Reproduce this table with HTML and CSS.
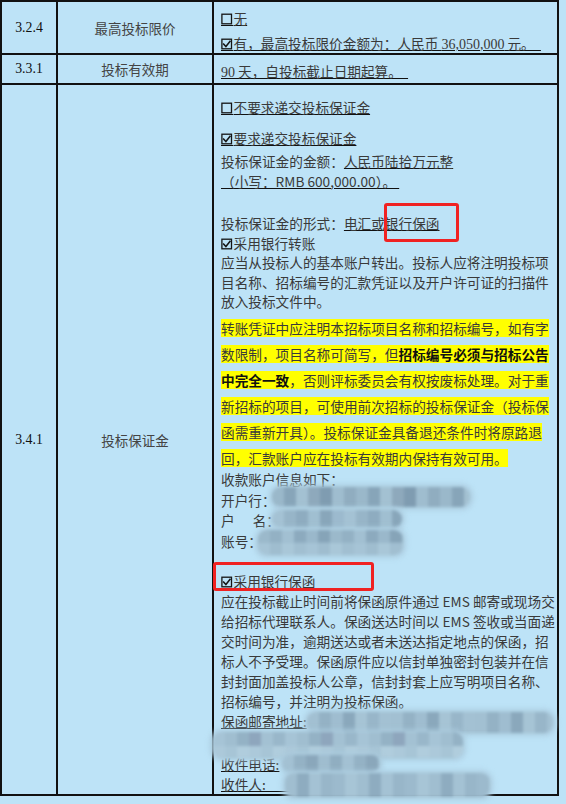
FILE: index.html
```html
<!DOCTYPE html>
<html lang="zh-CN">
<head>
<meta charset="utf-8">
<title>投标人须知前附表</title>
<link rel="stylesheet" href="styles.css">
</head>
<body>
<div class="page">
  <table class="grid">
    <tr class="stub"><td class="c1"></td><td class="c2"></td><td class="c3"></td></tr>
    <tr>
      <td class="c1 num">3.2.4</td>
      <td class="c2 label">最高投标限价</td>
      <td class="c3 body b1">
        <div class="l19"><span class="u"><svg class="cbx" viewBox="0 0 12 13"><rect x="0.9" y="1.2" width="9.6" height="9.6"/><path class="ul" d="M0 12.5H12"/></svg>无</span></div>
        <div class="l19 mt6"><span class="u"><svg class="cbx" viewBox="0 0 12 13"><rect x="0.9" y="1.2" width="9.6" height="9.6"/><path class="ck" d="M2.6 6.1L4.9 8.5L9 3.4"/><path class="ul" d="M0 12.5H12"/></svg>有，最高投标限价金额为：人民币 <span class="tnr">36,050,000</span> 元。&nbsp;&nbsp;</span></div>
      </td>
    </tr>
    <tr>
      <td class="c1 num">3.3.1</td>
      <td class="c2 label">投标有效期</td>
      <td class="c3 body b2">
        <div class="l20"><span class="u"><span class="tnr">90</span> 天，自投标截止日期起算。&nbsp;&nbsp;</span></div>
      </td>
    </tr>
    <tr>
      <td class="c1 num">3.4.1</td>
      <td class="c2 label">投标保证金</td>
      <td class="c3 body b3">
        <div class="ln"><span class="u"><svg class="cbx" viewBox="0 0 12 13"><rect x="0.9" y="1.2" width="9.6" height="9.6"/><path class="ul" d="M0 12.5H12"/></svg>不要求递交投标保证金</span></div>
        <div class="ln m115"><span class="u"><svg class="cbx" viewBox="0 0 12 13"><rect x="0.9" y="1.2" width="9.6" height="9.6"/><path class="ck" d="M2.6 6.1L4.9 8.5L9 3.4"/><path class="ul" d="M0 12.5H12"/></svg>要求递交投标保证金</span></div>
        <div class="m35">
          <div class="ln">投标保证金的金额：<span class="u">人民币陆拾万元整</span></div>
          <div class="ln"><span class="u">（小写：RMB 600,000.00）。&nbsp;</span></div>
        </div>
        <div class="m23">
          <div class="ln">投标保证金的形式：<span class="u">电汇或银行保函</span></div>
          <div class="ln"><svg class="cbx" viewBox="0 0 12 13"><rect x="0.9" y="1.2" width="9.6" height="9.6"/><path class="ck" d="M2.6 6.1L4.9 8.5L9 3.4"/></svg>采用银行转账</div>
          <div class="ln">应当从投标人的基本账户转出。投标人应将注明投标项</div>
          <div class="ln">目名称、招标编号的汇款凭证以及开户许可证的扫描件</div>
          <div class="ln">放入投标文件中。</div>
        </div>
        <div class="hl-blk">
          <div class="hl"><span>转账凭证中应注明本招标项目名称和招标编号，如有字</span></div>
          <div class="hl"><span>数限制，项目名称可简写，但<b>招标编号必须与招标公告</b></span></div>
          <div class="hl"><span><b>中完全一致</b>，否则评标委员会有权按废标处理。对于重</span></div>
          <div class="hl"><span>新招标的项目，可使用前次招标的投标保证金（投标保</span></div>
          <div class="hl"><span>函需重新开具）。投标保证金具备退还条件时将原路退</span></div>
          <div class="hl"><span>回，汇款账户应在投标有效期内保持有效可用。</span></div>
        </div>
        <div class="acct">
          <div>收款账户信息如下：</div>
          <div>开户行：</div>
          <div>户<span class="sp"></span>名：</div>
          <div>账号：</div>
        </div>
        <div class="gua">
          <div><svg class="cbx" viewBox="0 0 12 13"><rect x="0.9" y="1.2" width="9.6" height="9.6"/><path class="ck" d="M2.6 6.1L4.9 8.5L9 3.4"/></svg>采用银行保函</div>
          <div>应在投标截止时间前将保函原件通过 EMS 邮寄或现场交</div>
          <div>给招标代理联系人。保函送达时间以 EMS 签收或当面递</div>
          <div>交时间为准，逾期送达或者未送达指定地点的保函，招</div>
          <div>标人不予受理。保函原件应以信封单独密封包装并在信</div>
          <div>封封面加盖投标人公章，信封封套上应写明项目名称、</div>
          <div>招标编号，并注明为投标保函。</div>
          <div><span class="u">保函邮寄地址:</span></div>
          <div>&nbsp;</div>
        </div>
        <div class="recv">
          <div><span class="u">收件电话:</span></div>
          <div><span class="u">收件人:&nbsp;&nbsp;&nbsp;&nbsp;&nbsp;&nbsp;&nbsp;&nbsp;&nbsp;&nbsp;&nbsp;&nbsp;</span></div>
        </div>
      </td>
    </tr>
  </table>

  <div class="addr-line"></div>
  <div class="blur bA"></div>
  <div class="blur bB"></div>
  <div class="blur bC"></div>
  <div class="blur bD"></div>
  <div class="blur bE"></div>
  <div class="blur bF"></div>
  <div class="blur bG"></div>

  <div class="mark mark1"></div>
  <div class="mark mark2"></div>
</div>
</body>
</html>
```
FILE: styles.css
```css
html, body {
  margin: 0;
  padding: 0;
  background: #bde3f7;
}
body {
  font-family: "Noto Sans CJK SC", sans-serif;
  color: #3a3a3a;
}
.page {
  position: relative;
  width: 566px;
  height: 804px;
  overflow: hidden;
}
.grid {
  border-collapse: separate;
  border-spacing: 0;
  table-layout: fixed;
  width: 559px;
}
.grid td {
  box-sizing: border-box;
  padding: 0;
  border-right: 2px solid #111;
  border-bottom: 2px solid #111;
}
.grid td.c1 {
  width: 58px;
  border-left: 2px solid #111;
}
.grid td.c2 { width: 156px; }
.grid td.c3 { width: 345px; }
.stub td { height: 2px; font-size: 0; line-height: 0; }

.num {
  font-family: "Liberation Serif", serif;
  font-size: 13.8px;
  line-height: 16px;
  color: #111;
  text-align: center;
  vertical-align: middle;
}
.label {
  font-size: 13.5px;
  line-height: 16px;
  color: #444;
  text-align: center;
  vertical-align: middle;
}
.grid td.body {
  vertical-align: top;
  padding-left: 7px;
  font-size: 13.66px;
  white-space: nowrap;
}
.grid td.b1 { padding-top: 7px; }
.grid td.b2 { padding-top: 6px; padding-bottom: 2px; }
.grid td.b3 { padding-top: 13px; }

.l19 { line-height: 19px; height: 19px; }
.l20 { line-height: 20px; height: 20px; }
.mt6 { margin-top: 6px; }
.ln { line-height: 19.5px; height: 19.5px; }
.m115 { margin-top: 11.5px; }
.m35 { margin-top: 3.5px; }
.m23 { margin-top: 23px; }

.u {
  text-decoration: underline;
  text-decoration-color: #111;
  text-decoration-thickness: 1px;
}
.tnr {
  font-family: "Liberation Serif", serif;
  font-size: 14px;
  line-height: 0;
}

/* checkbox symbols */
.cbx {
  display: inline-block;
  width: 12px;
  height: 13px;
  vertical-align: -2px;
  margin-right: 0.5px;
  overflow: visible;
}
.cbx rect {
  fill: none;
  stroke: #151515;
  stroke-width: 1.3;
}
.cbx .ck {
  fill: none;
  stroke: #151515;
  stroke-width: 1.5;
  stroke-linecap: square;
}
.cbx .ul {
  stroke: #111;
  stroke-width: 1;
}

.hl-blk { margin-top: 1.5px; }
.hl { line-height: 26px; height: 26px; }
.hl span {
  display: inline-block;
  line-height: 18px;
  height: 18px;
  vertical-align: middle;
  background: #ffff00;
}
.hl b { font-weight: 700; color: #111; }

.acct div { line-height: 20.5px; height: 20.5px; }
.sp { display: inline-block; width: 18px; }
.gua { margin-top: 20px; }
.gua div { line-height: 20px; height: 20px; }
.recv { margin-top: 3px; }
.recv div { line-height: 20px; height: 20px; }

/* redaction patches laid over the account / address values */
.blur {
  position: absolute;
  border-radius: 9px;
  filter: blur(1.6px);
  box-shadow: 0 0 4px 3px rgba(170, 202, 221, 0.85);
  background-color: #9bbacd;
}
.bA {
  left: 272px; top: 487px; width: 198px; height: 20px;
  background-image: repeating-linear-gradient(90deg,
    #9ab8ca 0 12px, #87a5b9 12px 24px, #a3c1d2 24px 36px, #8ea9bc 36px 48px,
    #7f9cb1 48px 60px, #9fbdcf 60px 72px, #90adc0 72px 84px);
}
.bB {
  left: 272px; top: 510px; width: 130px; height: 18px;
  background-image: repeating-linear-gradient(90deg,
    #a4c2d4 0 12px, #97b5c8 12px 24px, #8eacc0 24px 36px, #a0bfd1 36px 48px,
    #88a6ba 48px 60px, #9cbace 60px 72px);
}
.bC {
  left: 258px; top: 530px; width: 145px; height: 25px;
  background-image:
    repeating-linear-gradient(90deg,
      #9bb9cb 0 12px, #93b1c4 12px 24px, #a2c0d2 24px 36px, #8caabe 36px 48px,
      #9ab8cb 48px 60px, #86a4b8 60px 72px),
    repeating-linear-gradient(90deg,
      #a6c4d6 0 12px, #9fbdcf 12px 24px, #a9c7d8 24px 36px, #a1bfd1 36px 48px);
  background-size: 100% 50%, 100% 50%;
  background-position: top, bottom;
  background-repeat: no-repeat;
}
.bD {
  left: 307px; top: 712px; width: 246px; height: 21px;
  background-image: repeating-linear-gradient(90deg,
    #a2c0d2 0 12px, #94b2c5 12px 24px, #9fbdd0 24px 36px, #8aa8bc 36px 48px,
    #a6c4d5 48px 60px, #98b6c9 60px 72px, #a3c1d3 72px 84px);
}
.bE {
  left: 213px; top: 732px; width: 250px; height: 26px;
  background-image:
    repeating-linear-gradient(90deg,
      #a6c4d6 0 12px, #a0bed0 12px 24px, #94b2c5 24px 36px, #8ea6bd 36px 48px,
      #a3c1d3 48px 60px, #99b7ca 60px 72px),
    repeating-linear-gradient(90deg,
      #acc9da 0 12px, #a7c5d6 12px 24px, #b0cddd 24px 36px);
  background-size: 100% 55%, 100% 45%;
  background-position: top, bottom;
  background-repeat: no-repeat;
}
.bF {
  left: 282px; top: 755px; width: 98px; height: 17px;
  background-image: repeating-linear-gradient(90deg,
    #a3c1d3 0 12px, #94b2c5 12px 24px, #8aa7bb 24px 36px, #9fbdcf 36px 48px,
    #90aec1 48px 60px);
}
.bG {
  left: 285px; top: 773px; width: 205px; height: 24px;
  background-image: repeating-linear-gradient(90deg,
    #a0bed0 0 12px, #8eacc0 12px 24px, #a4c2d4 24px 36px, #98b6c9 36px 48px,
    #9cbacd 48px 60px, #a7c5d6 60px 72px);
}
.addr-line {
  position: absolute;
  left: 433px; top: 730px; width: 66px; height: 1px;
  background: #222;
}

/* red annotation frames */
.mark {
  position: absolute;
  box-sizing: border-box;
  border: 3px solid #f02222;
  border-radius: 3px;
}
.mark1 { left: 384px; top: 203px; width: 75px; height: 39px; }
.mark2 { left: 213px; top: 562px; width: 161px; height: 29px; }
```
